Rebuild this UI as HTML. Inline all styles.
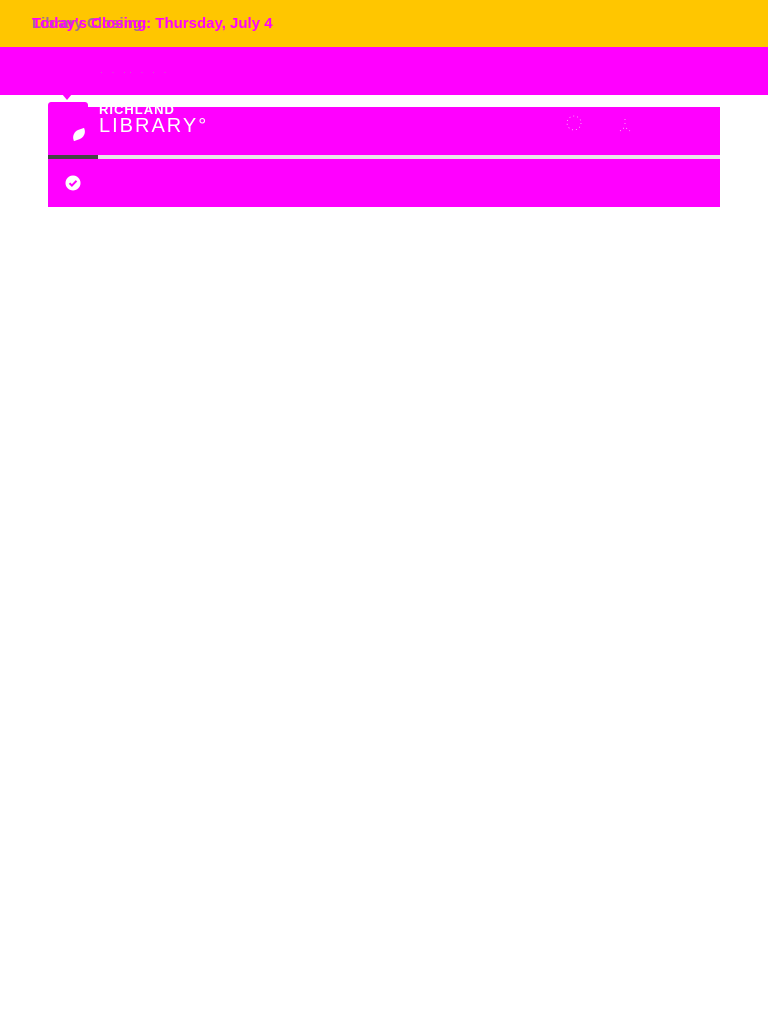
<!DOCTYPE html>
<html><head><style>
body{margin:0;width:768px;height:1024px;background:#fff;position:relative;overflow:hidden;font-family:"Liberation Sans",sans-serif}
.a{position:absolute}
</style></head><body>
<div class="a" style="left:0;top:0;width:768px;height:47px;background:#ffc600"></div>
<div class="a" style="left:32px;top:15px;font-weight:bold;font-size:15px;color:#f0f;white-space:nowrap"><span style="position:absolute;left:0;top:0;color:#a07090">Library Closing:</span><span style="position:relative">Today's Closing: Thursday, July 4</span></div>
<div class="a" style="left:0;top:47px;width:768px;height:48px;background:#f0f"></div>
<div class="a" style="left:100px;top:67px;font-size:9px;color:#a0a0a0;letter-spacing:3px;opacity:.6">· · ·· · · ·</div>
<div class="a" style="left:62px;top:94px;width:10px;height:6px;background:#f0f;clip-path:polygon(0 0,100% 0,50% 100%)"></div>
<div class="a" style="left:48px;top:102px;width:40px;height:6px;background:#f0f;border-radius:3px 3px 0 0"></div>
<div class="a" style="left:48px;top:107px;width:672px;height:48px;background:#f0f"></div>
<div class="a" style="left:99px;top:102px;font-size:13px;font-weight:bold;color:#fff;letter-spacing:1px">RICHLAND</div>
<div class="a" style="left:99px;top:115px;font-size:20px;color:#fff;letter-spacing:2px">LIBRARY°</div>
<div class="a" style="top:130px;width:14px;height:9px;background:#fff;border-radius:8px 0 8px 0;transform:rotate(-20deg);left:72px"></div>
<svg class="a" style="left:564px;top:113px" width="80" height="24" viewBox="0 0 80 24"><circle cx="10" cy="10" r="7" stroke="#fff" stroke-width="0.6" stroke-dasharray="1 3" fill="none"/><path d="M61 6v8M56 18l5-4 5 4" stroke="#fff" stroke-width="0.6" stroke-dasharray="1 3" fill="none"/></svg>
<div class="a" style="left:48px;top:155px;width:672px;height:4px;background:#e8e8e8"></div>
<div class="a" style="left:48px;top:155px;width:50px;height:4px;background:#444"></div>
<div class="a" style="left:48px;top:159px;width:672px;height:48px;background:#f0f"></div>
<svg class="a" style="left:65px;top:175px" width="16" height="16" viewBox="0 0 16 16"><circle cx="8" cy="8" r="7.5" fill="#fff"/><path d="M4.5 8.2l2.4 2.4 4.6-4.8" stroke="#f0f" stroke-width="2" fill="none"/></svg>
</body></html>
